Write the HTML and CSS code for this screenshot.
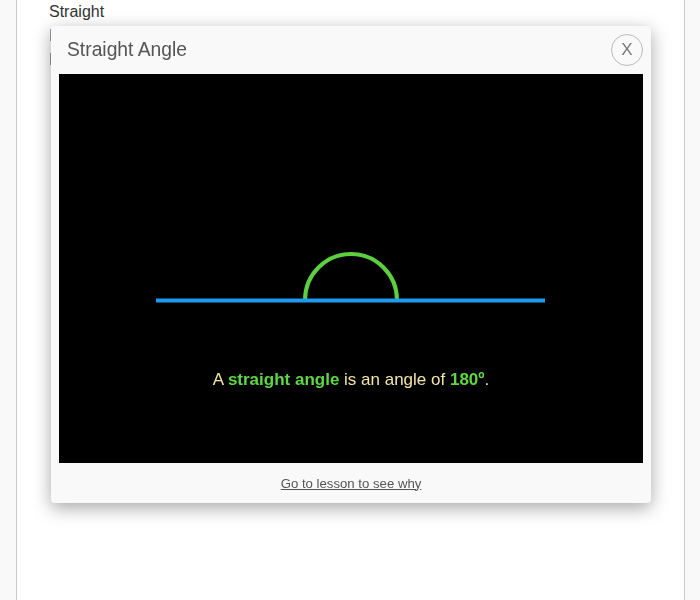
FILE: index.html
```html
<!DOCTYPE html>
<html>
<head>
<meta charset="utf-8">
<link rel="stylesheet" href="styles.css">
</head>
<body>
<div class="page">
  <div class="content">
    <p class="line">Straight</p>
    <p class="line hidden">Line</p>
    <p class="line hidden">Ray</p>
  </div>
</div>
<div class="modal">
  <div class="modal-header">
    <h2 class="modal-title">Straight Angle</h2>
    <button class="close">X</button>
  </div>
  <div class="stage">
    <svg class="drawing" width="584" height="240" viewBox="0 0 584 240">
      <path d="M246 226 A46 46 0 0 1 338 226" fill="none" stroke="#5ccf3f" stroke-width="4"/>
      <line x1="97" y1="226.5" x2="486" y2="226.5" stroke="#1e9bef" stroke-width="4"/>
    </svg>
    <p class="caption">A <b>straight angle</b> is an angle of <b>180º</b>.</p>
  </div>
  <div class="modal-footer">
    <a class="lesson-link" href="#">Go to lesson to see why</a>
  </div>
</div>
</body>
</html>
```
FILE: styles.css
```css
html, body {
  margin: 0;
  padding: 0;
  background: #f9f9f9;
  font-family: "Liberation Sans", Arial, sans-serif;
}
.page {
  margin-left: 16px;
  width: 667px;
  height: 600px;
  background: #fff;
  border-left: 1px solid #cccccc;
  border-right: 1px solid #cccccc;
}
.content {
  padding: 3px 0 0 32px;
}
.line {
  margin: 0 0 6px 0;
  font-size: 16px;
  line-height: 18px;
  color: #333;
}
.hidden {
  color: #777;
  will-change: transform;
  transform: translateZ(0);
}
.modal {
  position: absolute;
  left: 51px;
  top: 26px;
  width: 600px;
  height: 477px;
  background: #f9f9f9;
  border-radius: 4px;
  box-shadow: 0 5px 18px rgba(0,0,0,0.35);
  display: flex;
  flex-direction: column;
  z-index: 2;
}
.modal-header {
  height: 48px;
  display: flex;
  align-items: center;
  justify-content: space-between;
  padding: 0 8px 0 16px;
}
.modal-title {
  margin: 0;
  font-size: 19.3px;
  font-weight: normal;
  color: #555;
}
.close {
  width: 32px;
  height: 32px;
  border-radius: 50%;
  border: 1px solid #bbbbbb;
  background: transparent;
  color: #777;
  font-family: "Liberation Sans", Arial, sans-serif;
  font-size: 17px;
  padding: 0;
  line-height: 30px;
}
.stage {
  margin: 0 8px;
  height: 389px;
  background: #000;
}
.drawing {
  display: block;
}
.caption {
  margin: 56px 0 0 0;
  text-align: center;
  font-size: 17px;
  line-height: 20px;
  color: #f2e3a6;
}
.caption b {
  color: #5fd645;
}
.modal-footer {
  flex: 1;
  display: flex;
  align-items: center;
  justify-content: center;
}
.lesson-link {
  font-size: 13.2px;
  color: #555;
  text-decoration: underline;
}
```
